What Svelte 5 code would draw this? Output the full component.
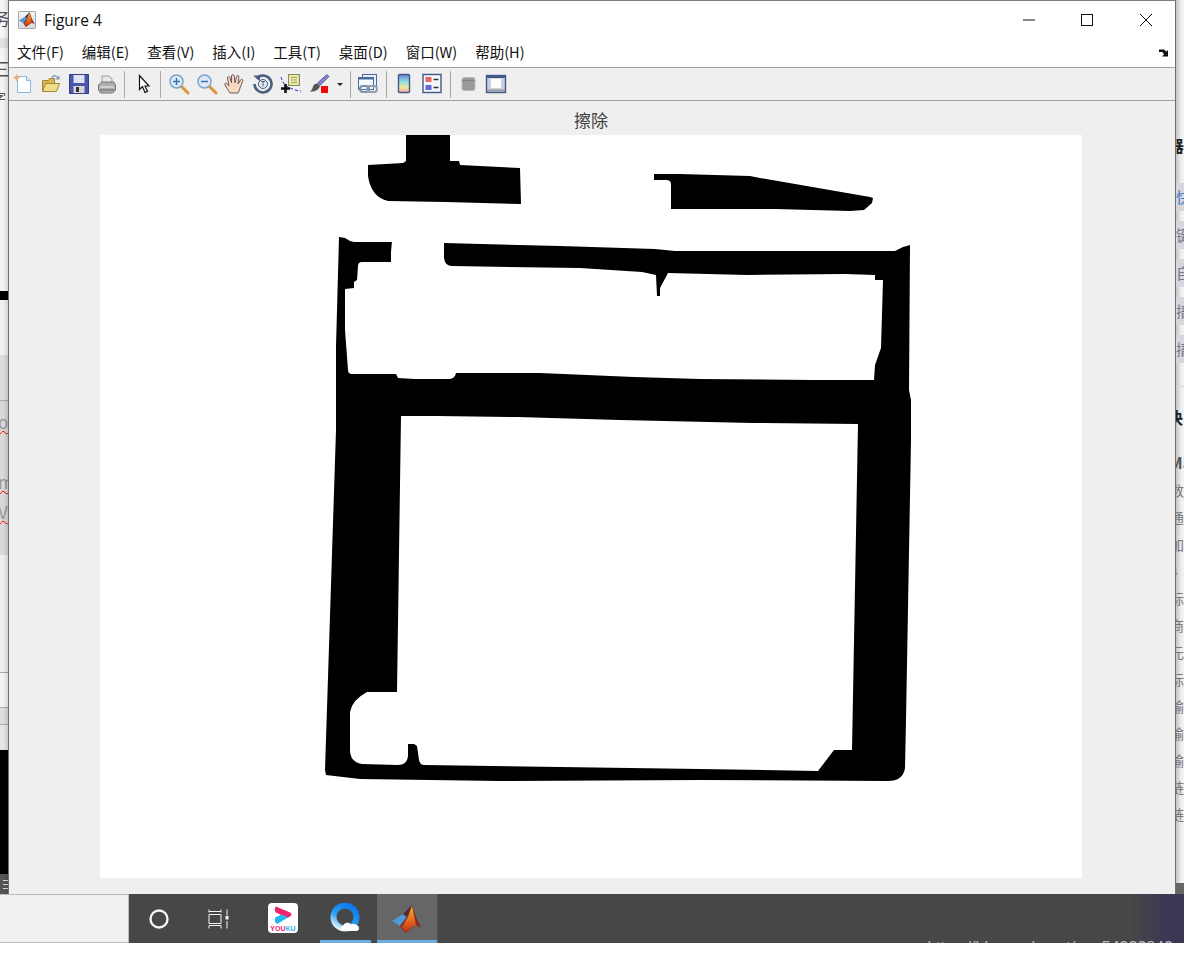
<script>
  const menus = ['文件(F)', '编辑(E)', '查看(V)', '插入(I)', '工具(T)', '桌面(D)', '窗口(W)', '帮助(H)'];

  // cropped bits of the windows behind the figure
  const leftBits = [
    { top: 8, text: '务', cls: 'big' },
    { top: 58, text: '三', cls: 'big' },
    { top: 87, text: '字', cls: 'small' },
    { top: 410, text: 'o', cls: 'typo' },
    { top: 470, text: 'm', cls: 'typo' },
    { top: 500, text: 'V', cls: 'typo' }
  ];
  const links = ['快', '键', '自', '搐', '搐'];
  const rows = ['数', '通', '加', '4', '标', '商', '元', '标', '输', '输', '输', '链', '链'];
</script>

<div class="page">
  <div class="desk">
    <div class="strip-left">
      {#each leftBits as bit}
        <span class="bit {bit.cls}" style="top: {bit.top}px">{bit.text}</span>
      {/each}
      <div class="stack-lines"><i></i><i></i><i></i></div>
    </div>

    <div class="window">
      <div class="titlebar">
        <div class="app-icon">
          <svg width="16" height="15" viewBox="0 0 30 28">
            <use href="#membrane" />
          </svg>
        </div>
        <span class="title">Figure 4</span>
        <div class="controls">
          <div class="ctl"><svg width="14" height="14" viewBox="0 0 14 14"><path d="M1 7h12" stroke="#111" fill="none" /></svg></div>
          <div class="ctl"><svg width="14" height="14" viewBox="0 0 14 14"><rect x="1.5" y="1.5" width="11" height="11" stroke="#111" fill="none" /></svg></div>
          <div class="ctl"><svg width="14" height="14" viewBox="0 0 14 14"><path d="M1 1l12 12M13 1L1 13" stroke="#111" fill="none" /></svg></div>
        </div>
      </div>

      <div class="menubar">
        {#each menus as m}
          <span class="menu">{m}</span>
        {/each}
        <svg class="dock" width="11" height="9" viewBox="0 0 11 9">
          <path d="M0 1.5h5l2.500 2L9 2v6.500H3L5 6.500 3.500 4H0z" fill="#111" />
        </svg>
      </div>

      <div class="toolbar">
        <!-- new -->
        <div class="tool"><svg width="20" height="20" viewBox="0 0 20 20">
          <path d="M4.500 2.500h9l4 4v12h-13z" fill="#fff" stroke="#8db8dc" />
          <path d="M13.500 2.500v4h4" fill="#dfeaf4" stroke="#8db8dc" />
          <circle cx="3.500" cy="3.500" r="2" fill="#f2a35e" />
          <path d="M0 3.500h7M3.500 0v7" stroke="#f0b080" />
        </svg></div>
        <!-- open -->
        <div class="tool"><svg width="20" height="20" viewBox="0 0 20 20">
          <path d="M1.500 6.500h6l1-2h5v13h-12z" fill="#d9b550" stroke="#a08838" />
          <path d="M1.500 17.500l3-8h14l-3 8z" fill="#f2dc8a" stroke="#a08838" />
          <path d="M11 3.500c2-2.500 4.500-2 6 .5" fill="none" stroke="#7d9cb8" stroke-width="1.500" />
          <path d="M18.500 1.500v4h-4z" fill="#7d9cb8" />
        </svg></div>
        <!-- save -->
        <div class="tool"><svg width="20" height="20" viewBox="0 0 20 20">
          <path d="M.5.500h19v19H.5z" fill="#4a56ac" stroke="#353f86" />
          <rect x="4.500" y="1" width="11" height="8" fill="#dfe3f2" />
          <rect x="4.500" y="12" width="11" height="7" fill="#d8d8d8" />
          <rect x="7" y="13" width="3" height="5" fill="#333" />
        </svg></div>
        <!-- print -->
        <div class="tool"><svg width="20" height="20" viewBox="0 0 20 20">
          <path d="M5 2h7l3 3v6H5z" fill="#e8e8e8" stroke="#9a9a9a" />
          <path d="M1.500 11l3-3h12l2 3v5l-3 3h-12l-2-3z" fill="#aeaeae" stroke="#777" />
          <path d="M3 13h14" stroke="#efefef" />
          <path d="M3 16h14" stroke="#666" />
        </svg></div>
        <div class="sep"></div>
        <!-- cursor -->
        <div class="tool"><svg width="20" height="20" viewBox="0 0 20 20">
          <path d="M6.500 1.500v14l3-3 2.500 6 2.500-1-2.500-5.500h4z" fill="#fff" stroke="#111" stroke-width="1.200" />
        </svg></div>
        <div class="sep"></div>
        <!-- zoom in -->
        <div class="tool"><svg width="22" height="22" viewBox="0 0 22 22">
          <path d="M13 13l7 7" stroke="#d9963a" stroke-width="3" stroke-linecap="round" />
          <circle cx="8.500" cy="8.500" r="6.500" fill="#dbeaf6" stroke="#7fa6c8" stroke-width="1.500" />
          <path d="M5 8.500h7M8.500 5v7" stroke="#3d74b0" stroke-width="1.500" />
        </svg></div>
        <!-- zoom out -->
        <div class="tool"><svg width="22" height="22" viewBox="0 0 22 22">
          <path d="M13 13l7 7" stroke="#d9963a" stroke-width="3" stroke-linecap="round" />
          <circle cx="8.500" cy="8.500" r="6.500" fill="#dbeaf6" stroke="#7fa6c8" stroke-width="1.500" />
          <path d="M5 8.500h7" stroke="#3d74b0" stroke-width="1.500" />
        </svg></div>
        <!-- pan -->
        <div class="tool"><svg width="22" height="22" viewBox="0 0 22 22">
          <path d="M6 20c-2-3-4-6-5-8-.7-1.600 1-2.600 2-1.500L5 13 3.500 5c-.3-1.800 2-2 2.500-.5L7.500 10 7.500 3c0-1.800 2.500-1.800 2.700 0L11 10l1.500-6.500c.4-1.700 2.700-1.200 2.400.5L14 11l2.500-4c1-1.400 3-.4 2.200 1.200L16 15c-.5 2-1 3.500-2 5z" fill="#f8d9c2" stroke="#6f5a60" />
        </svg></div>
        <!-- rotate -->
        <div class="tool"><svg width="22" height="22" viewBox="0 0 22 22">
          <path d="M4.500 5.500a8.500 8.500 0 1 1-2 5.500" fill="none" stroke="#4a5f80" stroke-width="2.600" />
          <path d="M1 2.500h7v6z" fill="#4a5f80" />
          <circle cx="11" cy="11" r="4.500" fill="#e4ecf4" stroke="#4a5f80" />
          <path d="M9 8.500h4M11 8.500v5" stroke="#4a5f80" />
        </svg></div>
        <!-- data cursor -->
        <div class="tool"><svg width="22" height="22" viewBox="0 0 22 22">
          <path d="M1 4c1 4 3 8 7 10s9 4 13 4" fill="none" stroke="#2a2ae0" stroke-dasharray="3 2" />
          <rect x="8.500" y="1.500" width="11" height="11" fill="#e6e6ae" stroke="#8a8a50" />
          <path d="M11 4.500h6M11 7h6M11 9.500h6" stroke="#a8a868" />
          <path d="M1 15.500h9M5.500 11v9" stroke="#111" stroke-width="2.600" />
        </svg></div>
        <!-- brush -->
        <div class="tool"><svg width="22" height="22" viewBox="0 0 22 22">
          <path d="M19 1.500l2 2-9 9-2.500-2.500z" fill="#7f84cc" stroke="#5e63a8" />
          <path d="M9.500 10.500l2.500 2.500c-1 3.500-5 6-10 5.500 2-1.500 2.500-3 3-5 .5-2 2.500-3 4.500-3z" fill="#555" />
          <rect x="13" y="13" width="7" height="7" fill="#f00808" />
        </svg></div>
        <div class="caret"></div>
        <div class="sep a"></div>
        <!-- link -->
        <div class="tool"><svg width="22" height="22" viewBox="0 0 22 22">
          <rect x="5.500" y="1.500" width="14" height="12" fill="#e8eef6" stroke="#4a6a9c" />
          <rect x="1.500" y="4.500" width="15" height="12" fill="#f4f7fb" stroke="#4a6a9c" />
          <path d="M1.500 4.500h15v2h-15z" fill="#4a6a9c" />
          <rect x="3" y="13" width="9" height="6" rx="3" fill="none" stroke="#7d8fa8" stroke-width="2" />
          <rect x="10" y="13" width="10" height="6" rx="3" fill="none" stroke="#8e9fb5" stroke-width="2" />
        </svg></div>
        <div class="sep b"></div>
        <!-- colorbar -->
        <div class="tool"><svg width="22" height="22" viewBox="0 0 22 22">
          <defs>
            <linearGradient id="cbar" x1="0" y1="0" x2="0" y2="1">
              <stop offset="0" stop-color="#6a7fd8" />
              <stop offset="0.4" stop-color="#8fe0e0" />
              <stop offset="0.7" stop-color="#f0e8a0" />
              <stop offset="1" stop-color="#f0a8a0" />
            </linearGradient>
          </defs>
          <rect x="5.500" y="1.500" width="11" height="18" rx="1" fill="url(#cbar)" stroke="#3e5a88" stroke-width="1.400" />
        </svg></div>
        <!-- legend -->
        <div class="tool"><svg width="22" height="22" viewBox="0 0 22 22">
          <rect x="2" y="1.500" width="18" height="18" fill="#f4f6fa" stroke="#3e5a88" stroke-width="1.400" />
          <rect x="4.500" y="4" width="6" height="5" fill="#e86464" />
          <rect x="4.500" y="12" width="6" height="5" fill="#6464e0" />
          <path d="M12.500 6.500h5M12.500 14.500h5" stroke="#333" stroke-width="1.500" />
        </svg></div>
        <div class="sep b"></div>
        <!-- hide plot tools -->
        <div class="tool"><svg width="22" height="22" viewBox="0 0 22 22">
          <rect x="5" y="4.500" width="13" height="13" rx="2" fill="#9a9a9a" stroke="#bdbdbd" />
          <path d="M5.500 7.500h12" stroke="#808080" />
        </svg></div>
        <!-- show plot tools -->
        <div class="tool"><svg width="22" height="22" viewBox="0 0 22 22">
          <rect x="1.500" y="2.500" width="19" height="17" fill="#c8d0e0" stroke="#3e5a88" stroke-width="1.400" />
          <rect x="6" y="6" width="10" height="9" fill="#fff" />
          <path d="M2 4h18" stroke="#3e5a88" stroke-width="2" />
          <path d="M2 17.500h18" stroke="#9a9a9a" stroke-width="2" />
        </svg></div>
      </div>

      <div class="figure">
        <div class="plot-title">擦除</div>
        <svg class="plot" width="982" height="743" viewBox="100 135 982 743">
          <path d="M406 135H450V161H459L460 165L520 168L521 204L446 202L388 201Q371 197 368 176V165L386 164L403 163L406 161Z" />
          <path d="M654 174H680L750 176L760 178L870 197L873 198L872 203L864 210L850 211L775 209H671V184Q671 180 666 180L654 180Z" />
          <path d="M339 237L345 238L350 241L354 242H393L444 243L560 246L655 249L675 251H895L903 247L910 245L909 390L911 400V440L906 720L905 768Q903 781 888 781L700 780L500 781L360 779L326 775L325 770L336 430V347Z" />
          <path class="hole" d="M393 230H444V258Q445 266 452 266L580 268L642 272L656 275L657 296H660V288L668 273L747 275L845 274L875 275V280H883L881 348L875 365L874 380L815 380L700 379L634 377L540 373H456Q455 379 448 379H415L398 378L396 374H352Q348 374 348 370L345 330V289L354 288V282L357 280L358 266Q358 262 362 262L391 262V252Z" />
          <path class="hole" d="M401 416L437 416L517 417L620 420L753 423L858 424L852 750H834L818 771L700 769L424 765Q420 765 419 760L417 746L414 744H408V756Q407 765 398 765L362 764Q350 762 350 750V712Q352 700 367 692H397Z" />
        </svg>
      </div>
    </div>

    <div class="strip-right">
      <div class="r-head first">器</div>
      <div class="r-links">
        {#each links as l, i}
          <div class="r-link" class:active={i === 0}>{l}</div>
        {/each}
      </div>
      <div class="r-rule"></div>
      <div class="r-head second">决</div>
      <div class="r-head third">Ma</div>
      <div class="r-list">
        {#each rows as r}
          <div class="r-row">{r}</div>
        {/each}
      </div>
      <div class="r-foot"></div>
    </div>
  </div>

  <div class="taskbar-row">
    <div class="search"></div>
    <div class="taskbar">
      <div class="cell">
        <svg width="22" height="22" viewBox="0 0 22 22"><circle cx="11" cy="11" r="8.500" fill="none" stroke="#f4f4f4" stroke-width="2.400" /></svg>
      </div>
      <div class="cell taskview">
        <svg width="22" height="20" viewBox="0 0 22 20">
          <path d="M1 3.500V.5M13 3.500V.5M1 2.500h12M1 5.500h12v9H1zM1 19.500v-3h12v3M19 .5v6M19 12v7.500" fill="none" stroke="#f4f4f4" />
          <rect x="17.500" y="7" width="3" height="3.500" fill="#f4f4f4" />
        </svg>
      </div>
      <div class="cell youku">
        <svg width="30" height="30" viewBox="0 0 30 30">
          <rect width="30" height="30" rx="4" fill="#fff" />
          <path d="M8 3.500l14 6c2 1 2 3 0 4l-3 1.500L8 9.500c-1.500-1-1.500-5 0-6z" fill="#f0246e" />
          <path d="M8 14l6-2.500 6 3-10 6c-2 .5-3-1-3-3v-2c0-1 .5-1.500 1-1.500z" fill="#22b8f0" />
          <text x="15" y="27.500" class="yk">YOU<tspan fill="#22b8f0">KU</tspan></text>
        </svg>
      </div>
      <div class="cell qq running">
        <svg width="30" height="30" viewBox="0 0 30 30">
          <defs>
            <linearGradient id="qqring" x1="0.800" y1="0" x2="0.200" y2="1">
              <stop offset="0" stop-color="#0a78f0" />
              <stop offset="0.6" stop-color="#2ca0f4" />
              <stop offset="1" stop-color="#dff2ff" />
            </linearGradient>
          </defs>
          <circle cx="15" cy="14" r="11.500" fill="none" stroke="url(#qqring)" stroke-width="6" />
          <path d="M13 28c-3 0-3.500-4.500 0-5 1-3.500 6-4.500 8-1.500 3-1.500 8 .5 8 3.500.2 2-1 3-3 3z" fill="#fff" />
        </svg>
      </div>
      <div class="cell matlab running">
        <svg width="30" height="28" viewBox="0 0 30 28"><use href="#membrane" /></svg>
      </div>
      <div class="tray-tail"></div>
      <span class="watermark">https://blog.csdn.net/qq_54923842</span>
    </div>
  </div>

  <svg class="defs" width="0" height="0">
    <defs>
      <linearGradient id="peak" x1="0.500" y1="0" x2="0.500" y2="1">
        <stop offset="0" stop-color="#f4b820" />
        <stop offset="0.55" stop-color="#e66a22" />
        <stop offset="1" stop-color="#b83418" />
      </linearGradient>
      <symbol id="membrane" viewBox="0 0 30 28">
        <path d="M0 16l11-7 5 4-8 8z" fill="#4f9ad6" />
        <path d="M11 9l5-5 4-4-5 12-7 9 8-8z" fill="#5a2a3a" />
        <path d="M8 21l7-9 5-12 4 12 5.500 11-5.500-3-11 8z" fill="#8a2c20" />
        <path d="M10 22l6-10 4-11 4 19-11 7z" fill="url(#peak)" />
      </symbol>
    </defs>
  </svg>
</div>

<style>
  :global(body) {
    background: #fff;
  }

  .page {
    width: 1184px;
    height: 969px;
    overflow: hidden;
    background: #fff;
    font-family: "Noto Sans CJK SC", "Noto Sans", sans-serif;
  }

  .desk {
    display: flex;
    height: 894px;
  }

  .strip-left {
    position: relative;
    width: 8px;
    flex: none;
    overflow: hidden;
    background: linear-gradient(to bottom,
      #f6f6f6 0 38px, #e2e2e2 38px 48px, #f4f4f4 48px 291px, #000 291px 300px,
      #f0f0f0 300px 355px, #dcdcdc 355px 400px, #aaa 400px 401px, #d8d8d8 401px 555px,
      #eee 555px 672px, #aaa 672px 673px, #f3f3f3 673px 707px, #aaa 707px 708px,
      #ddd 708px 724px, #aaa 724px 725px, #e6e6e6 725px 750px, #000 750px 874px,
      #555 874px 894px);
  }

  .strip-left::after {
    content: '';
    position: absolute;
    inset: 0;
    background: linear-gradient(to right, transparent 40%, rgba(0, 0, 0, 0.12));
  }

  .bit {
    position: absolute;
    left: -6px;
    color: #555;
    line-height: 20px;
    white-space: nowrap;
  }

  .bit.big { font-size: 18px; left: -8px; }
  .bit.small { font-size: 14px; left: -8px; }

  .bit.typo {
    left: -2px;
    color: #999;
    font-size: 17px;
    line-height: 24px;
    text-decoration: underline wavy #f00 1px;
    padding-right: 10px;
  }

  .stack-lines {
    position: absolute;
    left: 3px;
    top: 880px;
    display: flex;
    flex-direction: column;
    gap: 3px;
  }

  .stack-lines i {
    display: block;
    width: 5px;
    height: 1px;
    background: #ddd;
  }

  .window {
    flex: 1;
    display: flex;
    flex-direction: column;
    border-left: 1px solid #707070;
    border-right: 1px solid #707070;
    border-top: 1px solid #808080;
    background: #fff;
    min-width: 0;
  }

  .titlebar {
    height: 37px;
    display: flex;
    align-items: center;
    padding-left: 9px;
    flex: none;
  }

  .app-icon {
    width: 18px;
    height: 18px;
    display: flex;
    align-items: center;
    justify-content: center;
    border: 1px solid #a8a8a8;
    border-radius: 1px;
    background: linear-gradient(#f4f4f8, #d8dce4);
    margin-right: 8px;
    box-sizing: border-box;
  }

  .title {
    font-family: "Open Sans", "Noto Sans", sans-serif;
    font-size: 15.500px;
    color: #111;
  }

  .controls {
    margin-left: auto;
    display: flex;
  }

  .ctl {
    width: 58.500px;
    height: 37px;
    display: flex;
    align-items: center;
    justify-content: center;
  }

  .menubar {
    height: 29px;
    display: flex;
    align-items: center;
    gap: 18px;
    padding: 0 0 2px 8px;
    box-sizing: border-box;
    flex: none;
    position: relative;
  }

  .menu {
    font-size: 14.500px;
    color: #111;
    line-height: 20px;
  }

  .dock {
    position: absolute;
    right: 5px;
    top: 10px;
  }

  .toolbar {
    height: 32px;
    display: flex;
    align-items: center;
    background: #efefef;
    border-top: 1px solid #a0a0a0;
    border-bottom: 1px solid #a0a0a0;
    flex: none;
  }

  .tool {
    width: 28px;
    height: 28px;
    flex: none;
    display: flex;
    align-items: center;
    justify-content: center;
  }

  .caret {
    width: 14px;
    flex: none;
    display: flex;
    justify-content: center;
  }

  .caret::after {
    content: '';
    border-left: 3px solid transparent;
    border-right: 3px solid transparent;
    border-top: 3px solid #222;
  }

  .sep {
    width: 1px;
    height: 27px;
    flex: none;
    background: #a8a8a8;
    margin: 0 4px 0 3px;
  }

  .sep.a { margin: 0 3px; }
  .sep.b { margin: 0 3px 0 4px; }

  .figure {
    flex: 1;
    display: flex;
    flex-direction: column;
    background: #efefef;
    padding-left: 91px;
    min-height: 0;
  }

  .plot-title {
    width: 982px;
    height: 34px;
    padding-top: 2px;
    box-sizing: border-box;
    display: flex;
    align-items: center;
    justify-content: center;
    font-size: 17px;
    color: #404040;
  }

  .plot {
    display: block;
    background: #fff;
    fill: #000;
  }

  .plot .hole {
    fill: #fff;
  }

  .strip-right {
    width: 8px;
    flex: none;
    overflow: hidden;
    display: flex;
    flex-direction: column;
    background: linear-gradient(to right, #c4c4c4, #ececec 60%, #f4f4f4);
    white-space: nowrap;
  }

  .r-head {
    height: 20px;
    line-height: 20px;
    font-size: 16px;
    font-weight: 700;
    color: #222;
    flex: none;
  }

  .r-head.first { margin: 135px 0 0 -8px; }
  .r-head.second { margin: 20px 0 0 -9px; }
  .r-head.third { margin: 25px 0 0 -7px; color: #555; }

  .r-links {
    display: flex;
    flex-direction: column;
    gap: 10px;
    margin-top: 28px;
    flex: none;
  }

  .r-link {
    height: 28px;
    line-height: 28px;
    font-size: 15px;
    color: #7a7a88;
    background: #d6d6dc;
  }

  .r-link.active { color: #3b78c8; }

  .r-rule {
    height: 1px;
    background: #d8d8d8;
    margin-top: 23px;
    flex: none;
  }

  .r-list {
    margin-top: 5px;
    flex: none;
  }

  .r-row {
    height: 27px;
    line-height: 27px;
    font-size: 14px;
    color: #777;
    margin-left: -6px;
  }

  .r-foot {
    margin-top: auto;
    height: 11px;
    background: #666;
    flex: none;
  }

  .taskbar-row {
    display: flex;
    height: 49px;
  }

  .search {
    width: 129px;
    flex: none;
    box-sizing: border-box;
    background: #f0f0f0;
    border-top: 1px solid #bcbcbc;
    border-bottom: 1px solid #bcbcbc;
    border-right: 1px solid #bcbcbc;
  }

  .taskbar {
    flex: 1;
    position: relative;
    display: flex;
    overflow: hidden;
    background: linear-gradient(to right, #474747 0, #474747 1000px, #3a3853 1040px);
  }

  .cell {
    width: 60px;
    height: 49px;
    flex: none;
    display: flex;
    align-items: center;
    justify-content: center;
    box-sizing: border-box;
    position: relative;
  }

  .taskview { width: 59px; padding-top: 1px; }
  .youku { margin-left: 5px; padding-bottom: 1px; }
  .qq { margin-left: 2px; padding-bottom: 1px; }
  .matlab { margin-left: 2px; background: #666; }

  .yk {
    font-family: "Liberation Sans", sans-serif;
    font-size: 7px;
    font-weight: 700;
    fill: #f0246e;
    text-anchor: middle;
  }

  .running::after {
    content: '';
    position: absolute;
    left: 5px;
    right: 4px;
    bottom: 0;
    height: 3px;
    background: #6aaee4;
  }

  .matlab.running::after {
    left: 0;
    right: 0;
  }

  .tray-tail {
    width: 1px;
    background: #555;
  }

  .watermark {
    position: absolute;
    right: 11px;
    bottom: -12px;
    font-family: "Liberation Sans", sans-serif;
    font-size: 16px;
    line-height: 14px;
    color: #bbb;
  }

  .defs {
    position: absolute;
  }
</style>
